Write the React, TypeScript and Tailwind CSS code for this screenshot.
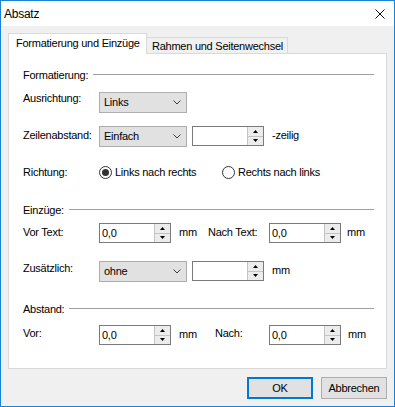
import React from 'react';

const Chevron = () => (
  <svg width="8" height="5" viewBox="0 0 8 5" className="shrink-0">
    <path d="M0.5 0.5 L4 4 L7.5 0.5" fill="none" stroke="#3c3c3c" strokeWidth="1" />
  </svg>
);

const Select: React.FC<{ value: string }> = ({ value }) => (
  <div className="flex h-[21px] w-[88px] shrink-0 items-center justify-between border border-[#adadad] bg-[#e1e1e1] pl-[4px] pr-[5px]">
    <span className="leading-[13px]">{value}</span>
    <Chevron />
  </div>
);

const Spin: React.FC<{ value?: string }> = ({ value = '' }) => (
  <div className="flex h-[20px] w-[72px] shrink-0 border border-[#7a7a7a] bg-white">
    <div className="flex-1 pl-[2px] leading-[18px]">{value}</div>
    <div className="flex w-[16px] flex-col border-l border-[#c4c4c4] bg-[#ececec]">
      <div className="flex flex-1 items-center justify-center border-b border-[#c4c4c4]">
        <svg width="5" height="3" viewBox="0 0 5 3">
          <path d="M2.5 0 L5 3 L0 3 Z" fill="#000" />
        </svg>
      </div>
      <div className="flex flex-1 items-center justify-center">
        <svg width="5" height="3" viewBox="0 0 5 3">
          <path d="M0 0 L5 0 L2.5 3 Z" fill="#000" />
        </svg>
      </div>
    </div>
  </div>
);

const Radio: React.FC<{ checked?: boolean; label: string }> = ({ checked, label }) => (
  <div className="flex h-[13px] items-center gap-[3px]">
    <div className="flex h-[13px] w-[13px] items-center justify-center rounded-full border border-[#333]">
      {checked && <div className="h-[7px] w-[7px] rounded-full bg-[#333]" />}
    </div>
    <span className="leading-[13px]">{label}</span>
  </div>
);

const Group: React.FC<{ title: string }> = ({ title }) => (
  <div className="flex h-[13px] items-start pr-[12px]">
    <span className="leading-[13px]">{title}</span>
    <div className="ml-[5px] mt-[5px] h-px flex-1 bg-[#a0a0a0]" />
  </div>
);

export default function App() {
  return (
    <div className="flex h-[407px] w-[395px] flex-col border border-[#1883d7] bg-[#f0f0f0] font-['Liberation_Sans',Arial,sans-serif] text-[11px] tracking-[-0.25px] text-black">
      {/* title bar */}
      <div className="flex h-[25px] shrink-0 items-center justify-between bg-white pl-[3px] pr-[9px]">
        <span className="text-[12px] leading-[14px]">Absatz</span>
        <svg width="10" height="10" viewBox="0 0 10 10">
          <path d="M0.5 0.5 L9.5 9.5 M9.5 0.5 L0.5 9.5" stroke="#111" strokeWidth="1" />
        </svg>
      </div>

      <div className="flex flex-1 flex-col px-[7px] pt-[7px]">
        {/* tabs */}
        <div className="flex h-[20px] items-end">
          <div className="relative z-10 -mb-px h-[21px] w-[139px] border border-b-0 border-[#d9d9d9] bg-white pl-[7px] pt-[3px] leading-[13px]">
            Formatierung und Einzüge
          </div>
          <div className="h-[16px] w-[141px] border-r border-t border-[#d9d9d9] bg-[#f0f0f0] pl-[5px] pt-[2px] leading-[13px]">
            Rahmen und Seitenwechsel
          </div>
        </div>

        {/* panel */}
        <div className="flex h-[316px] flex-col border border-[#d9d9d9] bg-white pl-[14px] pt-[15px]">
          <Group title="Formatierung:" />

          <div className="mt-[10px] flex items-start">
            <span className="w-[76px] shrink-0 leading-[13px]">Ausrichtung:</span>
            <Select value="Links" />
          </div>

          <div className="mt-[13px] flex items-start">
            <span className="mt-[3px] w-[76px] shrink-0 leading-[13px]">Zeilenabstand:</span>
            <Select value="Einfach" />
            <div className="ml-[5px]">
              <Spin />
            </div>
            <span className="ml-[8px] mt-[3px] leading-[13px]">-zeilig</span>
          </div>

          <div className="mt-[19px] flex items-start">
            <span className="w-[76px] shrink-0 leading-[13px]">Richtung:</span>
            <div className="w-[123px] shrink-0">
              <Radio checked label="Links nach rechts" />
            </div>
            <Radio label="Rechts nach links" />
          </div>

          <div className="mt-[25px]">
            <Group title="Einzüge:" />
          </div>

          <div className="mt-[6px] flex items-start">
            <span className="mt-[3px] w-[76px] shrink-0 leading-[13px]">Vor Text:</span>
            <Spin value="0,0" />
            <span className="mt-[3px] w-[37px] shrink-0 pl-[8px] leading-[13px]">mm</span>
            <span className="mt-[3px] w-[61px] shrink-0 leading-[13px]">Nach Text:</span>
            <Spin value="0,0" />
            <span className="ml-[6px] mt-[3px] leading-[13px]">mm</span>
          </div>

          <div className="mt-[18px] flex items-start">
            <span className="mt-[1px] w-[76px] shrink-0 leading-[13px]">Zusätzlich:</span>
            <Select value="ohne" />
            <div className="ml-[5px]">
              <Spin />
            </div>
            <span className="ml-[8px] mt-[3px] leading-[13px]">mm</span>
          </div>

          <div className="mt-[21px]">
            <Group title="Abstand:" />
          </div>

          <div className="mt-[9px] flex items-start">
            <span className="mt-[2px] w-[76px] shrink-0 leading-[13px]">Vor:</span>
            <Spin value="0,0" />
            <span className="mt-[3px] w-[44px] shrink-0 pl-[8px] leading-[13px]">mm</span>
            <span className="mt-[2px] w-[54px] shrink-0 leading-[13px]">Nach:</span>
            <Spin value="0,0" />
            <span className="ml-[7px] mt-[3px] leading-[13px]">mm</span>
          </div>
        </div>

        {/* buttons */}
        <div className="mt-[8px] flex justify-end gap-[8px]">
          <button className="flex h-[22px] w-[66px] items-center justify-center border-2 border-[#0078d7] bg-[#e1e1e1] leading-[13px]">
            OK
          </button>
          <button className="flex h-[22px] w-[66px] items-center justify-center border border-[#adadad] bg-[#e1e1e1] leading-[13px]">
            Abbrechen
          </button>
        </div>
      </div>
    </div>
  );
}
